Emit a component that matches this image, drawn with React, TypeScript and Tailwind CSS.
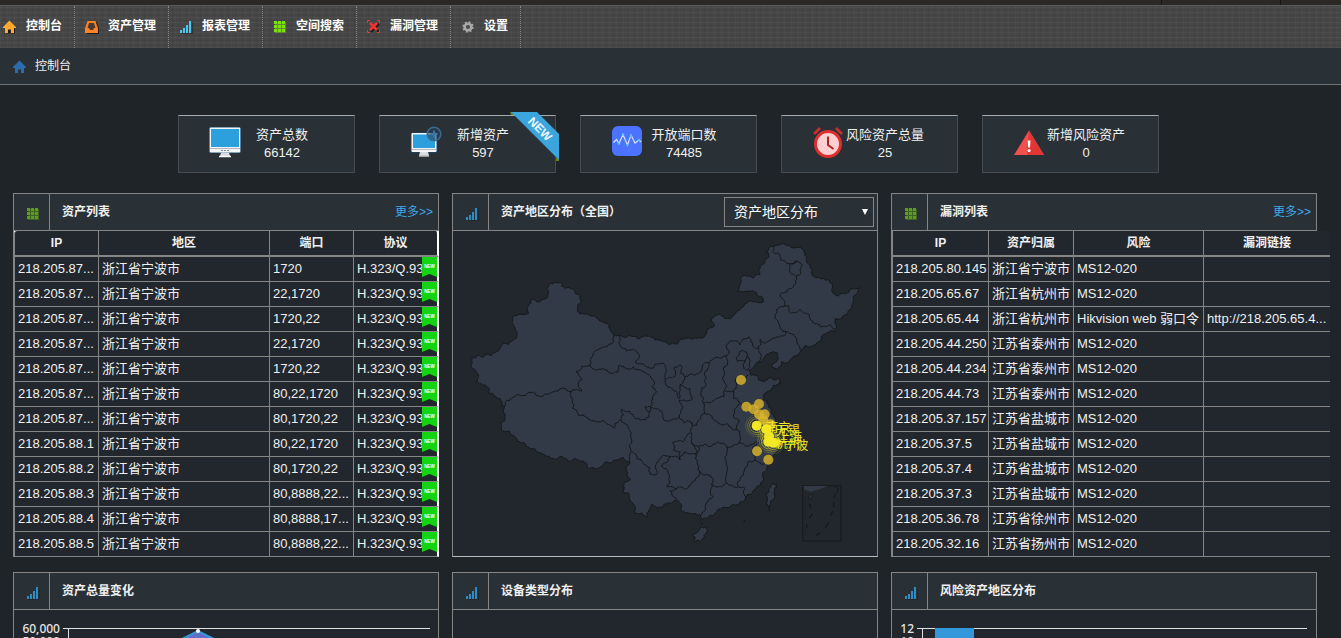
import type { ReactNode } from 'react';

type Pt = [number, number];

/* ---------- icons ---------- */

const HomeIcon = ({ fill, shadow }: { fill: string; shadow?: boolean }) => (
  <svg viewBox="0 0 14 14" className="size-3.5 shrink-0" aria-hidden="true">
    {shadow && <path d="M7.5 1.5 14 8h-2v5.5H9V10H7.5v3.5h-4V9z" fill="#1b1b1b" />}
    <path d="M6.5.5 13 7v1h-2v5H8V9.5H5V13H2V8H0V7z" fill={fill} />
  </svg>
);

const InboxIcon = () => (
  <svg viewBox="0 0 14 14" className="size-3.5 shrink-0" aria-hidden="true">
    <path d="M3 2h9l2 7v5H2z" fill="#1b1b1b" />
    <path d="M2.5 1h8L13 8.5V13H0V8.5z" fill="#ff8124" />
    <path d="M4 3h5l1.500 5H9L8 10H5L4 8H2.500z" fill="#4a3a30" />
  </svg>
);

const BarsIcon = ({ fill }: { fill: string }) => (
  <svg viewBox="0 0 14 14" className="size-3.5 shrink-0" shapeRendering="crispEdges" aria-hidden="true">
    <path d="M2 14h12V3h-1v10H2z" fill="#1d1d1d" opacity=".5" />
    <path d="M1 10h2v3H1zM4 8h2v5H4zM7 5h2v8H7zM10 1h2v12h-2z" fill={fill} />
  </svg>
);

const GridIcon = ({ fill }: { fill: string }) => (
  <svg viewBox="0 0 14 14" className="size-3.5 shrink-0" shapeRendering="crispEdges" aria-hidden="true">
    <path d="M2 2h11v11H2z" fill={fill} opacity=".45" />
    <path d="M1 1h3v3H1zM5 1h3v3H5zM9 1h3v3H9zM1 5h3v3H1zM5 5h3v3H5zM9 5h3v3H9zM1 9h3v3H1zM5 9h3v3H5zM9 9h3v3H9z" fill={fill} />
  </svg>
);

const BugIcon = () => (
  <svg viewBox="0 0 14 14" className="size-3.5 shrink-0" aria-hidden="true">
    <path d="m4 4 8 8M12 4l-8 8" stroke="#1b1b1b" strokeWidth="2" />
    <path d="m3 3 7 7M10 3l-7 7" stroke="#f2332f" strokeWidth="2.600" />
    <path d="M.5 3V.5H3M10 .5h2.500V3M12.500 10v2.500H10M3 12.500H.5V10" stroke="#f2332f" fill="none" />
  </svg>
);

const GearIcon = () => (
  <svg viewBox="0 0 14 14" className="size-3.5 shrink-0" aria-hidden="true">
    <circle cx="7" cy="7" r="4.700" fill="none" stroke="#a9a9a9" strokeWidth="2" strokeDasharray="1.850 1.840" />
    <circle cx="7" cy="7" r="3.300" fill="none" stroke="#a9a9a9" strokeWidth="2.600" />
  </svg>
);

const MonitorIcon = () => (
  <svg viewBox="0 0 32 32" className="size-8" aria-hidden="true">
    <rect x="0" y="1" width="32" height="26" rx="1.500" fill="#1f4f78" />
    <rect x=".7" y="1.500" width="30.600" height="25" rx="1" fill="#f2f6f8" />
    <rect x="2" y="3" width="28" height="18" fill="#2ba0dc" />
    <path d="M1 22.500h30" stroke="#b7b0ba" />
    <path d="M12 24.500h8" stroke="#8c8796" strokeDasharray="2 1" />
    <path d="M12 26.500h8l1 3.500H11z" fill="#d9dce2" />
    <path d="M10 30.500h12" stroke="#fff" strokeWidth="1.500" />
  </svg>
);

const MonitorAddIcon = () => (
  <svg viewBox="0 0 32 32" className="size-8" aria-hidden="true">
    <rect x="1" y="6.500" width="26" height="20" rx="1" fill="#1f4f78" />
    <rect x="1.500" y="7" width="25" height="19" rx="1" fill="#f2f6f8" />
    <rect x="3" y="8.500" width="22" height="13.500" fill="#2ba0dc" />
    <path d="M2 23.500h24" stroke="#b7b0ba" />
    <path d="M10 26h8l1 3.500H9z" fill="#d9dce2" />
    <path d="M9 30h10" stroke="#fff" />
    <circle cx="24" cy="8" r="6.800" fill="#263f56" fillOpacity=".6" stroke="#3b6a91" strokeWidth="1.600" />
    <path d="M24 4.500v7M20.500 8h7" stroke="#3f78a8" strokeWidth="1.800" />
  </svg>
);

const PulseIcon = () => (
  <svg viewBox="0 0 32 32" className="size-8" aria-hidden="true">
    <rect x="1" y="0" width="30" height="30" rx="6" fill="#4b73ff" />
    <path d="m2.500 16.500 3-3 2.500 4 4-9 4.500 10.500L20 9l4 8 4-3 2 2" fill="none" stroke="#cfe3ff" strokeWidth="1.200" />
    <g fill="#58c2f5">
      <circle cx="12" cy="8.500" r="1.200" /><circle cx="20" cy="10" r="1.200" /><circle cx="8" cy="17.500" r="1.200" />
      <circle cx="16.500" cy="19" r="1.200" /><circle cx="28" cy="14" r="1.200" />
    </g>
  </svg>
);

const ClockIcon = () => (
  <svg viewBox="0 0 32 32" className="size-8" aria-hidden="true">
    <path d="m2 8 6-6M24 2l6 6" stroke="#c9302c" strokeWidth="2.600" />
    <circle cx="16" cy="18" r="12.500" fill="#ffd0d2" stroke="#dd2f2d" strokeWidth="3" />
    <path d="M16 10.500V19l5.500 4" fill="none" stroke="#b3211f" strokeWidth="2" />
  </svg>
);

const AlertIcon = () => (
  <svg viewBox="0 0 32 32" className="size-8" aria-hidden="true">
    <path d="M16 4.500 31 29H1z" fill="#f0504e" />
    <path d="M16 4.500 31 29H14z" fill="#e23634" />
    <path d="M14.700 14.500h2.800l-.5 7h-1.800z" fill="#fff" />
    <circle cx="16.100" cy="24.500" r="1.500" fill="#fff" />
  </svg>
);

/* ---------- data ---------- */

const navItems: { label: string; icon: ReactNode }[] = [
  { label: '控制台', icon: <HomeIcon fill="#ffa92e" shadow /> },
  { label: '资产管理', icon: <InboxIcon /> },
  { label: '报表管理', icon: <BarsIcon fill="#45c8f5" /> },
  { label: '空间搜索', icon: <GridIcon fill="#7ee00f" /> },
  { label: '漏洞管理', icon: <BugIcon /> },
  { label: '设置', icon: <GearIcon /> },
];

const stats: { label: string; value: string; icon: ReactNode; isNew?: boolean }[] = [
  { label: '资产总数', value: '66142', icon: <MonitorIcon /> },
  { label: '新增资产', value: '597', icon: <MonitorAddIcon />, isNew: true },
  { label: '开放端口数', value: '74485', icon: <PulseIcon /> },
  { label: '风险资产总量', value: '25', icon: <ClockIcon /> },
  { label: '新增风险资产', value: '0', icon: <AlertIcon /> },
];

const assets: [string, string][] = [
  ['218.205.87...', '1720'],
  ['218.205.87...', '22,1720'],
  ['218.205.87...', '1720,22'],
  ['218.205.87...', '22,1720'],
  ['218.205.87...', '1720,22'],
  ['218.205.87...', '80,22,1720'],
  ['218.205.87...', '80,1720,22'],
  ['218.205.88.1', '80,22,1720'],
  ['218.205.88.2', '80,1720,22'],
  ['218.205.88.3', '80,8888,22...'],
  ['218.205.88.4', '80,8888,17...'],
  ['218.205.88.5', '80,8888,22...'],
];

const vulns: [string, string, string, string][] = [
  ['218.205.80.145', '浙江省宁波市', 'MS12-020', ''],
  ['218.205.65.67', '浙江省杭州市', 'MS12-020', ''],
  ['218.205.65.44', '浙江省杭州市', 'Hikvision web 弱口令', 'http://218.205.65.4...'],
  ['218.205.44.250', '江苏省泰州市', 'MS12-020', ''],
  ['218.205.44.234', '江苏省泰州市', 'MS12-020', ''],
  ['218.205.44.73', '江苏省泰州市', 'MS12-020', ''],
  ['218.205.37.157', '江苏省盐城市', 'MS12-020', ''],
  ['218.205.37.5', '江苏省盐城市', 'MS12-020', ''],
  ['218.205.37.4', '江苏省盐城市', 'MS12-020', ''],
  ['218.205.37.3', '江苏省盐城市', 'MS12-020', ''],
  ['218.205.36.78', '江苏省徐州市', 'MS12-020', ''],
  ['218.205.32.16', '江苏省扬州市', 'MS12-020', ''],
];

/* ---------- map ---------- */

const parse = (s: string): Pt[] => s.trim().split(/\s+/).map((p) => p.split(',').map(Number) as Pt);

// Subdivides a segment with repeatable jitter so that borders look surveyed rather than ruled.
function roughen(a: Pt, b: Pt, out: Pt[]) {
  const dx = b[0] - a[0];
  const dy = b[1] - a[1];
  const len = Math.hypot(dx, dy);
  if (len < 6) {
    out.push(b);
    return;
  }
  const h = Math.sin(a[0] * 12.9898 + a[1] * 78.233 + b[0] * 37.719 + b[1] * 4.581) * 43758.5453;
  const k = (h - Math.floor(h) - 0.5) * 0.5;
  const mid: Pt = [(a[0] + b[0]) / 2 - dy * k, (a[1] + b[1]) / 2 + dx * k];
  roughen(a, mid, out);
  roughen(mid, b, out);
}

function toPath(s: string, close = false): string {
  const pts = parse(s);
  if (close) pts.push(pts[0]);
  const out: Pt[] = [pts[0]];
  for (let i = 1; i < pts.length; i++) roughen(pts[i - 1], pts[i], out);
  return 'M' + out.map((p) => `${p[0].toFixed(1)} ${p[1].toFixed(1)}`).join('L') + (close ? 'Z' : '');
}

const mainland =
  '65,520 63,545 80,562 80,592 98,600 118,625 150,640 155,660 165,662 160,680 165,700 155,712 162,740 190,752 225,775 255,792 285,810 320,822 355,830 375,820 400,828 410,835 418,852 440,852 470,830 500,825 520,817 540,832 540,880 522,895 520,922 537,925 545,950 555,965 555,985 575,983 590,997 597,975 605,958 640,962 665,955 678,945 690,955 693,975 715,985 735,985 752,990 750,1010 758,1018 763,1000 775,995 800,980 835,968 870,952 887,940 905,925 920,905 938,888 937,865 950,850 958,830 968,815 985,790 985,775 990,760 975,745 965,720 980,710 970,690 955,660 940,640 945,625 970,600 993,595 990,583 960,577 942,590 925,585 920,572 905,572 897,555 915,540 935,530 950,508 970,500 983,505 985,520 965,545 975,550 995,530 1025,520 1052,497 1065,482 1090,480 1110,470 1130,445 1155,440 1155,400 1190,390 1205,365 1222,325 1228,307 1200,315 1180,325 1150,325 1148,300 1120,280 1087,272 1080,240 1062,200 1045,187 1005,178 975,182 947,198 957,215 930,250 930,268 910,280 880,272 870,295 862,318 885,320 910,318 935,335 942,350 915,350 880,365 855,385 825,402 795,392 783,405 792,425 765,450 730,460 700,462 655,478 615,465 580,455 510,452 492,450 480,420 445,400 420,392 390,388 390,340 375,322 345,310 333,292 318,292 290,310 292,338 275,345 243,342 235,385 190,395 195,430 190,465 155,480 110,508 80,512';

const islands = [
  '730,1045 750,1028 770,1027 768,1045 750,1070 732,1068',
  '948,930 965,898 980,897 975,930 960,960 958,977 948,955',
];

const borders = [
  '165,662 185,640 225,632 275,635 330,612 365,618',
  '365,618 395,618 385,600 395,585 378,560 420,543',
  '420,543 430,505 450,490 490,472 492,450',
  '420,543 450,553 490,565 505,560 508,540 550,545 580,560 610,585 620,620 605,650 600,680 585,705 555,700 540,680 515,672 512,705 492,730 470,715 440,710 385,692 368,670 365,618',
  '512,705 535,730 543,760 545,800 540,832',
  '510,452 520,490 565,505 555,530 600,550 638,535 642,580',
  '645,582 675,575 675,545 692,540 692,565 705,575 690,600 688,640 665,610 645,582',
  '690,600 720,610 727,640 700,645 688,645 688,690 665,705 640,700 610,670 585,665 600,680',
  '705,575 735,570 757,540 777,533',
  '777,533 765,560 768,600 760,655',
  '688,690 688,700 720,710 740,720 752,700 765,685',
  '777,533 795,517 830,512 823,560 830,600 822,635 785,650 760,655',
  '830,512 830,480 845,468 870,480 897,455 910,485 925,490 935,515 925,535',
  '862,515 880,497 892,510 885,530 862,530 862,515',
  '885,530 893,515 900,545 893,555 882,550 885,530',
  '822,615 850,618 860,600 858,580 895,570',
  '850,618 850,640 872,655 850,690 868,705 862,735 865,775',
  '925,490 930,462 945,475 980,455 1010,440',
  '1010,440 985,410 978,375 1000,365 1015,362 1025,385 1070,385 1100,415 1130,425 1155,432',
  '1010,440 1035,455 1045,480 1052,497',
  '1000,365 1005,350 990,335 1030,305 1040,275 1057,240 1040,228 1010,235 985,205 968,200 975,182',
  '1040,228 1018,240 1020,262 1040,275',
  '760,655 765,685 800,710 830,715 850,735 862,735',
  '725,712 720,740 725,775 745,785 780,785 815,775 830,788 865,775 900,780 920,770',
  '872,655 900,675 915,700 900,730 930,755 920,780',
  '920,780 905,800 915,825 935,838 955,830',
  '915,825 885,850 870,880 865,905 885,910 887,940',
  '830,788 825,820 830,860 830,893 865,905',
  '745,785 738,810 745,855 760,870 780,870 785,895 830,893',
  '785,895 790,935 765,965 755,990',
  '738,810 705,800 690,825 660,815 635,845 655,865 650,905 680,912 725,895 745,875 745,855',
  '680,912 660,915 680,940',
  '720,745 700,770 668,772 670,795 690,800 690,825',
  '725,775 738,810',
  '545,800 560,820 580,835 600,868 620,868 625,830 645,812 660,815',
];

const minorPoints: Pt[] = [
  [873, 585], [889, 665], [911, 673], [927, 657], [927, 688], [944, 688], [962, 718], [940, 705], [921, 799], [955, 824], [980, 774],
];
const majorPoints: Pt[] = [[920, 722], [949, 733], [957, 754], [955, 770], [970, 773]];
const cityLabels: { name: string; x: number; y: number }[] = [
  { name: '南京', x: 949, y: 742 },
  { name: '无锡', x: 977, y: 750 },
  { name: '上海', x: 985, y: 770 },
  { name: '杭州', x: 977, y: 790 },
  { name: '宁波', x: 1003, y: 795 },
];

const ChinaMap = () => (
  <svg viewBox="9 138 1272 975" className="block w-full" role="img" aria-label="资产地区分布">
    <g fill="#323a47" stroke="#15191c" strokeWidth="3" strokeLinejoin="round">
      <path d={toPath(mainland, true)} />
      {islands.map((d) => (
        <path key={d} d={toPath(d, true)} />
      ))}
    </g>
    <g fill="none" stroke="#15191c" strokeWidth="3" strokeLinejoin="round">
      {borders.map((d) => (
        <path key={d} d={toPath(d)} />
      ))}
    </g>
    <circle cx="883" cy="1009" r="3" fill="#15191c" />
    <rect x="1058" y="902" width="115" height="166" fill="none" stroke="#181c1f" strokeWidth="4" />
    <path d="M1060 903h72l-22 10-28 7-18-6z" fill="#323a47" />
    <path d="m1078 930 9-2-2 12-8 2zM1156 905l6 4" fill="#323a47" stroke="#181c1f" strokeWidth="3" />
    <path d="m1165 908-4 14M1156 925l-4 14M1151 950v16M1148 978l-6 14M1136 1012l-10 16M1110 1044l-12 7M1070 1028v-12M1078 998l10-10M1082 970l-4-14" fill="none" stroke="#15191c" strokeWidth="4" />
    <g fill="#d9b32b" fillOpacity=".82">
      {minorPoints.map(([x, y]) => (
        <circle key={`${x}-${y}`} cx={x} cy={y} r="15" />
      ))}
    </g>
    {majorPoints.map(([x, y]) => (
      <g key={`${x}-${y}`} fill="none" stroke="#e8df2a" strokeWidth="2">
        <circle cx={x} cy={y} r="21" opacity=".7" />
        <circle cx={x} cy={y} r="27" opacity=".45" />
        <circle cx={x} cy={y} r="33" opacity=".25" />
        <circle cx={x} cy={y} r="15" fill="#f4e925" stroke="none" />
      </g>
    ))}
    <g fill="#f4e925" fontSize="36">
      {cityLabels.map((c) => (
        <text key={c.name} x={c.x} y={c.y}>{c.name}</text>
      ))}
    </g>
  </svg>
);

/* ---------- panels ---------- */

function Panel({ title, icon, action, children }: { title: string; icon: 'grid' | 'bars'; action?: ReactNode; children: ReactNode }) {
  return (
    <section className="min-w-0 flex-1">
      <header className="flex h-[38px] border border-[#858585] bg-[#293036]">
        <div className="flex w-9 shrink-0 items-center justify-center border-r border-[#858585] pt-1 pl-0.5">
          {icon === 'grid' ? <GridIcon fill="#5d9c1c" /> : <BarsIcon fill="#2f8bc4" />}
        </div>
        <h2 className="flex-1 truncate pl-3 text-xs leading-9 font-bold">{title}</h2>
        {action}
      </header>
      {children}
    </section>
  );
}

const MoreLink = () => (
  <a href="#more" className="pr-[5px] text-xs leading-9 text-[#3fa9e6]">更多&gt;&gt;</a>
);

const NewTag = () => (
  <svg viewBox="0 0 15 20" className="absolute top-0 right-0 h-5 w-[15px]" aria-label="NEW">
    <path d="M0 0h15v20l-7.500-3L0 20z" fill="#13d313" />
    <text x="7.500" y="11" textAnchor="middle" fontSize="4.500" fontWeight="700" fill="#fff">NEW</text>
  </svg>
);

function Th({ children, className = '' }: { children: ReactNode; className?: string }) {
  return (
    <th className={`h-[26px] border-b-2 border-[#858585] bg-[#22272d] p-0 text-center text-xs leading-5 font-bold ${className}`}>{children}</th>
  );
}

function Td({ children, className = '' }: { children?: ReactNode; className?: string }) {
  return (
    <td className={`h-[25px] truncate border-b border-[#858585] bg-[#22272d] py-0 pr-0 pl-[3px] text-[13px] leading-5 ${className}`}>{children}</td>
  );
}

function AssetTable() {
  return (
    <div className="overflow-hidden border-l border-[#858585]">
      <table className="w-full table-fixed border-separate border-spacing-0 bg-white">
        <thead>
          <tr>
            <Th className="w-[84px] rounded-tl-[3px] border-l">IP</Th>
            <Th className="border-l">地区</Th>
            <Th className="w-[84px] border-l">端口</Th>
            <Th className="w-[86px] rounded-tr-[3px] border-r-2 border-l border-r-white">协议</Th>
          </tr>
        </thead>
        <tbody>
          {assets.map(([ip, ports], i) => (
            <tr key={i}>
              <Td className="border-l">{ip}</Td>
              <Td className="border-l">浙江省宁波市</Td>
              <Td className="border-l">{ports}</Td>
              <Td className="relative border-r-2 border-l border-r-white">
                H.323/Q.93
                <NewTag />
              </Td>
            </tr>
          ))}
        </tbody>
      </table>
    </div>
  );
}

function VulnTable() {
  return (
    <div className="border-l border-[#858585]">
      <table className="w-[calc(100%+13px)] table-fixed border-separate border-spacing-0">
        <thead>
          <tr>
            <Th className="w-[96px] border-l">IP</Th>
            <Th className="w-[85px] border-l">资产归属</Th>
            <Th className="w-[130px] border-l">风险</Th>
            <Th className="border-l">漏洞链接</Th>
          </tr>
        </thead>
        <tbody>
          {vulns.map((row, i) => (
            <tr key={i}>
              {row.map((cell, j) => (
                <Td key={j} className="border-l">{cell}</Td>
              ))}
            </tr>
          ))}
        </tbody>
      </table>
    </div>
  );
}

const chartBody = 'border-x border-b border-[#858585] bg-[#22272d]';

const AssetTrendChart = () => (
  <svg viewBox="0 0 424 200" className="block w-full" role="img" aria-label="资产总量变化">
    <path d="M54 86 184 21l130 65v110H54z" fill="#5f6fc9" />
    <path d="M54 86 184 21l130 65" fill="none" stroke="#3398db" strokeWidth="2" />
    <path d="M49 18.500h367M54.500 18v178" stroke="#e2e2e2" fill="none" />
    <circle cx="184" cy="21" r="2" fill="#fff" />
    <g fill="#e6e6e6" fontSize="12" fontWeight="500" textAnchor="end" className="font-['Noto_Sans','Noto_Sans_CJK_SC',sans-serif]">
      <text x="46" y="23">60,000</text>
      <text x="46" y="36">50,000</text>
    </g>
  </svg>
);

const RiskRegionChart = () => (
  <svg viewBox="0 0 424 200" className="block w-full" role="img" aria-label="风险资产地区分布">
    <path d="M25 18.500h390M30.500 18v178" stroke="#e2e2e2" fill="none" />
    <path d="M43 18h39v178H43z" fill="#3398db" />
    <g fill="#e6e6e6" fontSize="12" fontWeight="500" textAnchor="end" className="font-['Noto_Sans','Noto_Sans_CJK_SC',sans-serif]">
      <text x="22" y="23">12</text>
      <text x="22" y="36">10</text>
    </g>
  </svg>
);

export default function App() {
  return (
    <div className="h-screen overflow-hidden bg-[#1f2428] font-['Liberation_Sans','Noto_Sans_CJK_SC',sans-serif] text-[#f0f0f0]">
      <div className="flex h-[5px] justify-end bg-[#2b2826] pr-[60px]">
        <div className="w-[120px] border-x border-[#161514]" />
      </div>
      <nav className="flex h-[43px] border-t border-[#5c5c5c] bg-[#464646] bg-[repeating-linear-gradient(0deg,rgba(255,255,255,0.03)_0_1px,transparent_1px_2px,rgba(0,0,0,0.05)_2px_3px,transparent_3px_5px),repeating-linear-gradient(90deg,rgba(255,255,255,0.025)_0_1px,transparent_1px_4px,rgba(0,0,0,0.04)_4px_5px,transparent_5px_7px)] pl-[3px]">
        {navItems.map((item, i) => (
          <a
            key={item.label}
            href="#nav"
            className={`flex items-start gap-[9px] border-r border-dotted border-[#858585] pt-[11px] pr-3 text-xs leading-[18px] font-bold text-white ${i === 0 ? '' : 'pl-2.5'}`}
          >
            <span className="pt-[3px]">{item.icon}</span>
            <span>{item.label}</span>
          </a>
        ))}
      </nav>
      <div className="flex h-[37px] items-start gap-2 border-b border-[#6f7173] bg-[#293036] pt-[9px] pl-[13px] text-xs leading-[18px]">
        <span className="pt-[3px]"><HomeIcon fill="#2b6cb0" /></span>
        <span>控制台</span>
      </div>

      <main className="pr-6 pl-[13px]">
        <div className="flex justify-center gap-6 pt-[30px] pl-[7px]">
          {stats.map((s) => (
            <div key={s.label} className="relative flex h-[58px] w-[177px] border border-[#464b4f] border-t-[#a6a8aa] bg-[#293036] pl-[30px]">
              <div className="pt-2.5">{s.icon}</div>
              <div className="ml-px w-20 pt-2.5 text-center text-[13px] leading-[18px] whitespace-nowrap">
                <div>{s.label}</div>
                <div>{s.value}</div>
              </div>
              {s.isNew && (
                <svg viewBox="0 0 49 49" className="absolute -top-1 -right-1 size-[49px]" aria-label="NEW">
                  <path d="M0 0h4v3H1zM46 46h3v3l-3 1z" fill="#6d7d12" />
                  <path d="M1 0h26l22 22v26z" fill="#3ba5dd" />
                  <text x="30" y="21" transform="rotate(45 30 17)" textAnchor="middle" fontSize="12" fontWeight="700" fill="#eaf6fd">NEW</text>
                </svg>
              )}
            </div>
          ))}
        </div>

        <div className="mt-5 flex items-start gap-[13px]">
          <Panel title="资产列表" icon="grid" action={<MoreLink />}>
            <AssetTable />
          </Panel>
          <Panel
            title="资产地区分布（全国）"
            icon="bars"
            action={
              <div className="relative mt-[3px] mr-[3px] h-[30px] w-[150px]">
                <select aria-label="分布类型" className="h-full w-full appearance-none border border-[#858585] bg-transparent pl-[9px] text-sm text-white">
                  <option>资产地区分布</option>
                </select>
                <svg viewBox="0 0 6 6" className="pointer-events-none absolute top-3 right-1.5 size-1.5" aria-hidden="true">
                  <path d="M0 0h6L3 6z" fill="#fff" />
                </svg>
              </div>
            }
          >
            <div className="border-x border-b border-[#858585] border-b-[#bcbcbc] bg-[#22272d]">
              <ChinaMap />
            </div>
          </Panel>
          <Panel title="漏洞列表" icon="grid" action={<MoreLink />}>
            <VulnTable />
          </Panel>
        </div>

        <div className="mt-[15px] flex items-start gap-[13px]">
          <Panel title="资产总量变化" icon="bars">
            <div className={chartBody}><AssetTrendChart /></div>
          </Panel>
          <Panel title="设备类型分布" icon="bars">
            <div className={`h-[200px] ${chartBody}`} />
          </Panel>
          <Panel title="风险资产地区分布" icon="bars">
            <div className={chartBody}><RiskRegionChart /></div>
          </Panel>
        </div>
      </main>
    </div>
  );
}
